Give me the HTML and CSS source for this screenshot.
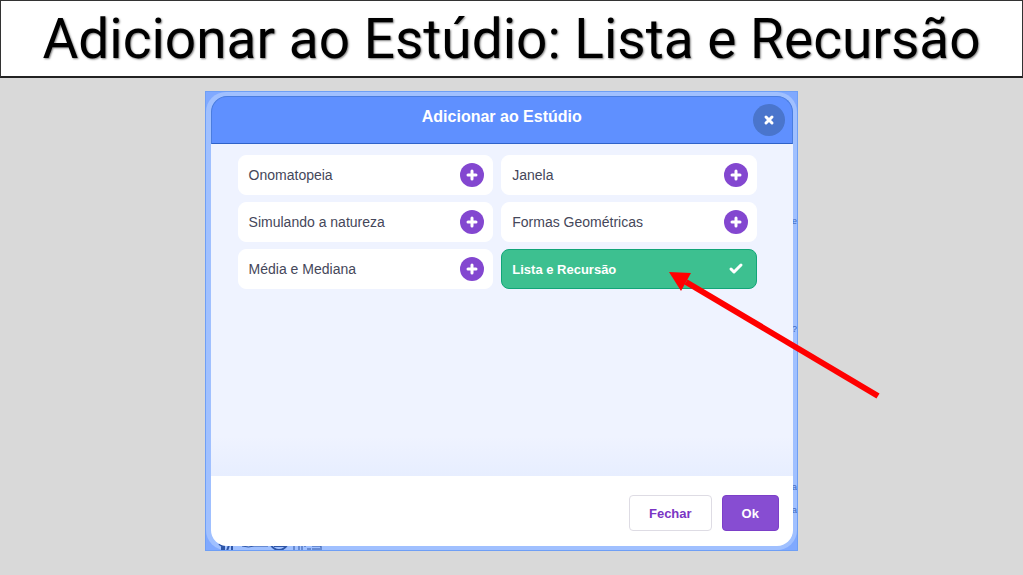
FILE: index.html
```html
<!DOCTYPE html>
<html lang="pt-BR">
<head>
  <meta charset="UTF-8">
  <title>Adicionar ao Estúdio: Lista e Recursão</title>
  <link rel="stylesheet" href="styles.css">
</head>
<body>

  <header class="slide-header">
    <h1>Adicionar ao Estúdio: Lista e Recursão</h1>
  </header>

  <main class="stage">
    <!-- page behind the modal -->
    <div class="backdrop" aria-hidden="true">
      <span class="peek peek-1">e</span>
      <span class="peek peek-2">?</span>
      <span class="peek peek-3">a</span>
      <span class="peek peek-4">a</span>
      <svg class="doodles" width="110" height="8" viewBox="0 0 110 8" fill="none" stroke="#2e56a8" stroke-width="2">
        <path d="M2 1l3 2v5M7 1v7M12 2l-2 6M15 1v6"/>
        <path d="M25 3q7 2 12 0h14" stroke-width="1"/>
        <path d="M53 1q4 6 9 6t9-6M57 3h12"/>
        <path d="M77 1v7M82 1v7M85 2v6" stroke-width="1"/>
        <path d="M87 3h2M90 6h4M95 3h9v5M95 6h8" stroke-width="1"/>
      </svg>
    </div>

    <section class="modal" role="dialog" aria-labelledby="modal-title">
      <div class="modal-header">
        <h2 id="modal-title">Adicionar ao Estúdio</h2>
        <button class="close-btn" type="button" aria-label="Fechar janela">
          <svg width="12" height="12" viewBox="0 0 12 12"><path d="M3 3l6 6M9 3l-6 6" stroke="#fff" stroke-width="3" stroke-linecap="round"/></svg>
        </button>
      </div>

      <div class="modal-body">
        <div class="studio-list">
          <button class="studio" type="button">Onomatopeia
            <svg class="plus" width="24" height="24" viewBox="0 0 24 24"><circle cx="12" cy="12" r="12"/><path d="M12 8v8M8 12h8"/></svg>
          </button>
          <button class="studio" type="button">Janela
            <svg class="plus" width="24" height="24" viewBox="0 0 24 24"><circle cx="12" cy="12" r="12"/><path d="M12 8v8M8 12h8"/></svg>
          </button>
          <button class="studio" type="button">Simulando a natureza
            <svg class="plus" width="24" height="24" viewBox="0 0 24 24"><circle cx="12" cy="12" r="12"/><path d="M12 8v8M8 12h8"/></svg>
          </button>
          <button class="studio" type="button">Formas Geométricas
            <svg class="plus" width="24" height="24" viewBox="0 0 24 24"><circle cx="12" cy="12" r="12"/><path d="M12 8v8M8 12h8"/></svg>
          </button>
          <button class="studio" type="button">Média e Mediana
            <svg class="plus" width="24" height="24" viewBox="0 0 24 24"><circle cx="12" cy="12" r="12"/><path d="M12 8v8M8 12h8"/></svg>
          </button>
          <button class="studio selected" type="button">Lista e Recursão
            <svg class="check" width="24" height="24" viewBox="0 0 24 24"><path d="M7 12l3 3 7-7"/></svg>
          </button>
        </div>
      </div>

      <div class="modal-footer">
        <button class="btn" type="button">Fechar</button>
        <button class="btn btn-primary" type="button">Ok</button>
      </div>
    </section>

    <svg class="arrow" width="212" height="128" viewBox="0 0 212 128" aria-hidden="true">
      <path d="M17 10L209 124" stroke="#f00" stroke-width="6"/>
      <path d="M0 0l22 1-10 18z" fill="#f00"/>
    </svg>
  </main>

</body>
</html>
```
FILE: styles.css
```css
* {
  box-sizing: border-box;
}

body {
  background-color: #d9d9d9;
  font-family: "Liberation Sans", Arial, sans-serif;
  margin: 0;
}

.slide-header {
  background-color: #fff;
  border: 1px solid #333;
  border-bottom: 2px solid #222;
  padding: 7px 0 6px;
  text-align: center;
}

.slide-header h1 {
  color: #000;
  font-family: Roboto, Inter, sans-serif;
  font-size: 55px;
  font-weight: 400;
  line-height: 62px;
  margin: 0;
  text-shadow: 1px 1px 2px rgba(0, 0, 0, 0.5);
  white-space: nowrap;
}

.stage {
  position: relative;
  margin: 13px 22% 24px 20%;
  padding: 5px 5px 5px 6px;
}

.backdrop {
  position: absolute;
  inset: 0;
  overflow: hidden;
  background-color: #80a9ff;
  border: 1px solid #6f9ff5;
}

/* light ring around the modal */
.backdrop::before {
  content: "";
  position: absolute;
  inset: 0;
  border-radius: 20px;
  background-color: #a0c0ff;
}

.peek {
  position: absolute;
  right: 0;
  color: #3d68c0;
  font-size: 9px;
  line-height: 12px;
}

.peek-1 { top: 123px; }
.peek-2 { top: 231px; }
.peek-3 { top: 389px; }
.peek-4 { top: 412px; }

.doodles {
  position: absolute;
  left: 11px;
  bottom: -1px;
}

.modal {
  position: relative;
}

.modal-header {
  position: relative;
  background-color: #5f90ff;
  border: 1px solid #4a7de0;
  border-bottom: 1px solid #2f62c8;
  border-radius: 16px 16px 0 0;
  height: 48px;
  padding: 10px 0;
}

.modal-header h2 {
  color: #fff;
  font-size: 16px;
  line-height: 20px;
  margin: 0;
  text-align: center;
}

.close-btn {
  position: absolute;
  top: 7px;
  right: 7px;
  display: flex;
  align-items: center;
  justify-content: center;
  width: 32px;
  height: 32px;
  padding: 0;
  border: none;
  border-radius: 50%;
  background-color: #4a75cc;
  cursor: pointer;
}

.modal-body {
  background: linear-gradient(#eff3ff 88%, #e7eeff);
  min-height: 332px;
  padding: 11px 36px 11px 27px;
}

.studio-list {
  display: grid;
  grid-template-columns: 1fr 1fr;
  gap: 7px 8px;
}

.studio {
  display: flex;
  align-items: center;
  justify-content: space-between;
  height: 40px;
  padding: 0 8px 0 10px;
  border: 1px solid #fff;
  border-radius: 8px;
  background-color: #fff;
  color: #45475a;
  font-family: inherit;
  font-size: 14px;
  cursor: pointer;
}

.studio.selected {
  background-color: #3dc090;
  border: 1px solid #12a578;
  color: #fff;
  font-size: 13px;
  font-weight: bold;
}

.plus circle {
  fill: #8347d0;
}

.plus path {
  stroke: #fff;
  stroke-width: 3;
  stroke-linecap: round;
}

.check path {
  fill: none;
  stroke: #fff;
  stroke-width: 3;
  stroke-linecap: round;
  stroke-linejoin: round;
}

.modal-footer {
  display: flex;
  justify-content: flex-end;
  gap: 10px;
  background-color: #fff;
  border-radius: 0 0 16px 16px;
  padding: 19px 14px 15px;
}

.btn {
  height: 36px;
  padding: 0 19px;
  border: 1px solid #dedce4;
  border-radius: 4px;
  background-color: #fff;
  color: #7a35c4;
  font-family: inherit;
  font-size: 13px;
  font-weight: bold;
  cursor: pointer;
}

.btn-primary {
  border-color: #7c3fc8;
  background-color: #874dd2;
  color: #fff;
}

.arrow {
  position: absolute;
  left: 464px;
  top: 181px;
}
```
